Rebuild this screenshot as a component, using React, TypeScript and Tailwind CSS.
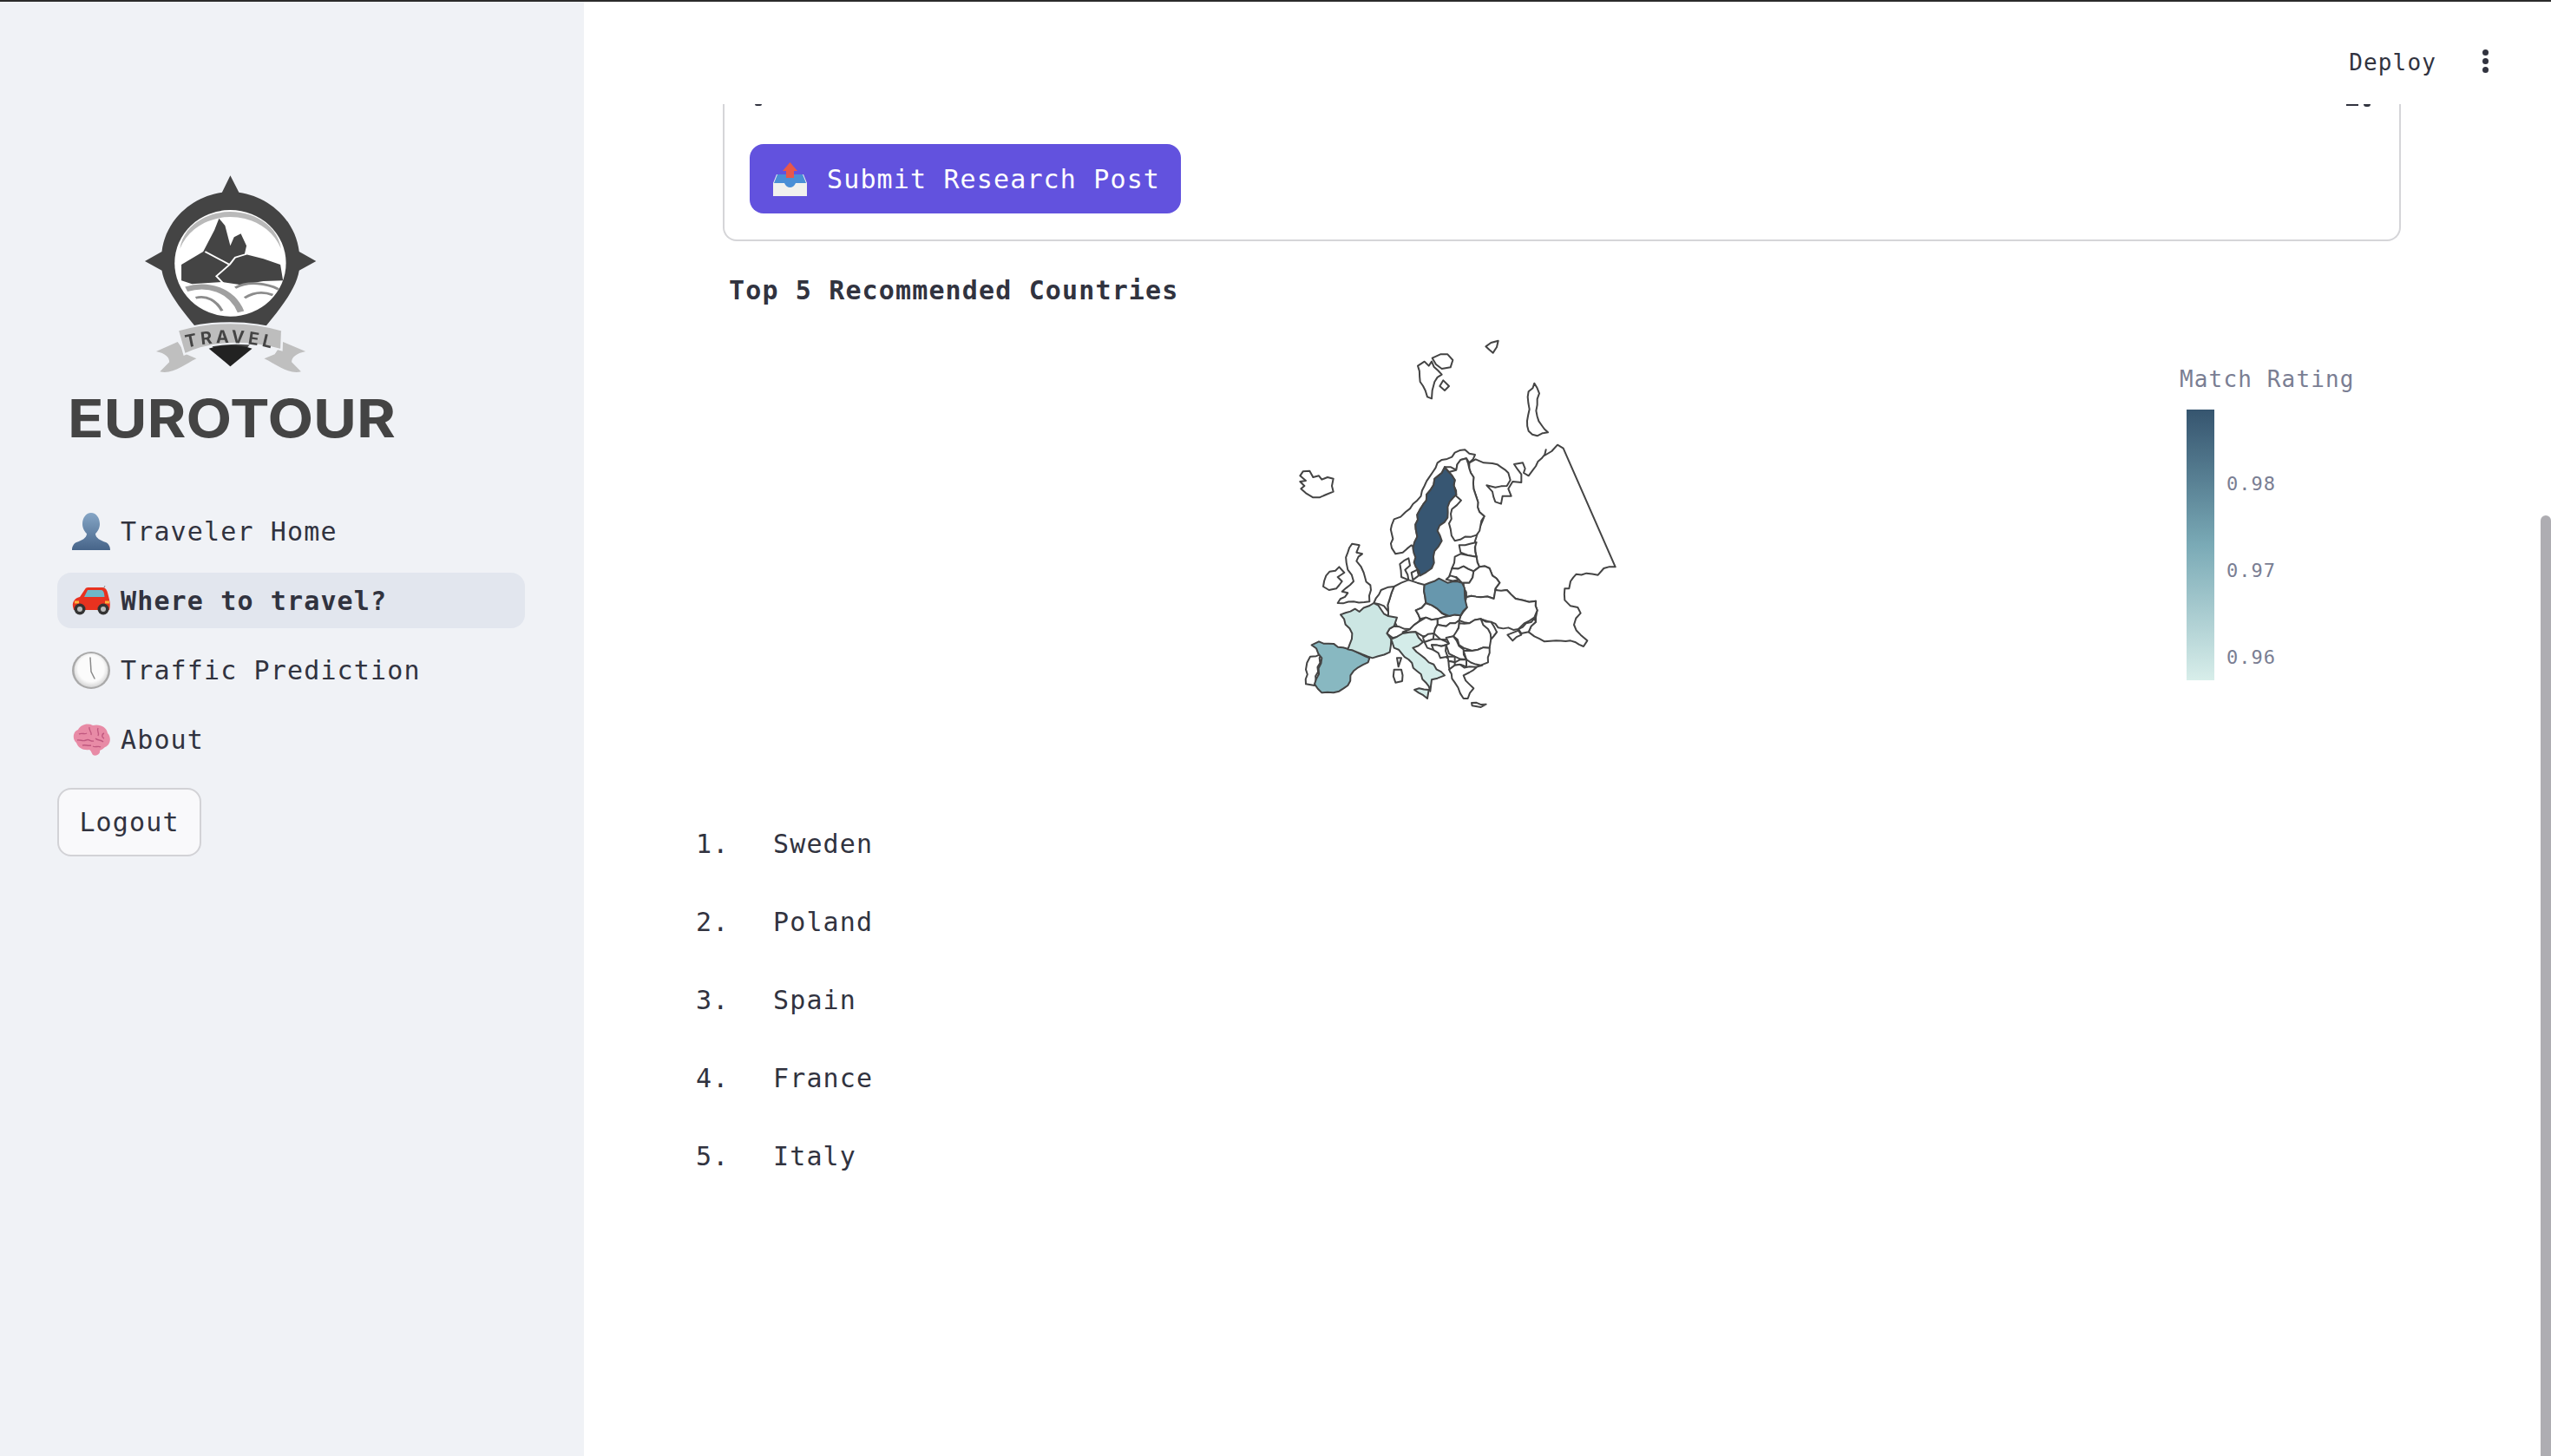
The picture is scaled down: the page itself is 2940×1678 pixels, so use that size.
import React from "react";

const mono = "font-['DejaVu_Sans_Mono','Liberation_Mono',monospace]";

// adds small coastline wobble; the seed comes from the sorted end points so shared borders stay together
const roughen = (pts: string) => {
  const p = pts.split(" ").map((s) => s.split(",").map(Number));
  const res: string[] = [];
  p.forEach((a, i) => {
    const b = p[(i + 1) % p.length];
    res.push(a.join(","));
    const len = Math.hypot(b[0] - a[0], b[1] - a[1]);
    if (len < 22 || len > 170) return;
    const forward = a[0] + a[1] * 2000 < b[0] + b[1] * 2000;
    const [s, e] = forward ? [a, b] : [b, a];
    const n = Math.floor(len / 16);
    const mids: string[] = [];
    for (let k = 1; k < n; k++) {
      const t = k / n;
      const r = Math.sin(s[0] * 12.9 + e[1] * 78.2 + k * 37.7) * 43758.5;
      const off = (r - Math.floor(r) - 0.5) * 11;
      const x = s[0] + (e[0] - s[0]) * t - ((e[1] - s[1]) / len) * off;
      const y = s[1] + (e[1] - s[1]) * t + ((e[0] - s[0]) / len) * off;
      mids.push(`${x.toFixed(1)},${y.toFixed(1)}`);
    }
    res.push(...(forward ? mids : mids.reverse()));
  });
  return res.join(" ");
};

const neutral: string[] = [
  "115,535 125,520 148,518 160,540 180,535 190,548 210,540 230,545 225,570 230,590 205,600 160,610 135,595 118,580 130,570 115,555 135,552",
  "522,155 545,140 560,155 570,140 605,185 580,210 572,240 570,268 555,262 548,240 530,210",
  "572,128 600,115 625,115 643,135 635,160 605,165 585,150",
  "598,225 610,205 630,225 615,240",
  "757,88 775,75 800,68 795,90 782,110 770,100",
  "925,215 942,250 935,290 935,330 950,360 972,385 935,397 905,380 900,345 908,305 902,262",
  // russia
  "722,478 750,490 780,492 810,505 835,525 842,550 830,570 790,575 760,568 780,590 790,625 810,632 815,605 845,605 835,580 850,555 880,558 880,530 855,495 885,490 893,510 888,525 905,535 920,515 950,475 965,445 960,465 985,450 1005,428 1025,440 1205,850 1165,855 1145,878 1105,872 1070,875 1050,900 1045,925 1030,925 1030,965 1050,985 1075,990 1085,1010 1062,1050 1085,1085 1108,1105 1095,1125 1050,1105 1000,1105 960,1108 925,1090 905,1075 930,1040 930,1025 935,1000 930,968 885,965 860,960 830,930 800,935 790,925 805,905 780,880 770,855 735,850 725,815 725,745 752,675 735,660 725,610 715,580 715,540 700,510 700,490",
  // norway
  "432,705 440,685 480,660 520,620 545,570 590,490 640,470 650,455 685,445 720,462 700,490 690,475 670,480 655,515 615,505 605,525 580,545 565,585 540,635 520,670 515,720 520,745 505,780 500,775 470,800 445,805 432,785",
  // finland
  "655,605 672,620 640,650 630,700 650,760 725,740 752,675 735,660 725,610 715,580 715,540 700,510 690,475 670,480 655,515 630,522 615,505 650,550",
  "665,775 725,765 725,815 695,810 670,800",
  "640,855 650,815 670,805 695,810 725,815 735,850 715,865 680,848",
  "640,855 680,848 715,865 700,905 675,905 655,885 630,885",
  "620,893 635,880 665,895",
  "715,865 735,850 770,855 780,880 805,905 790,925 785,960 740,955 690,955 680,905 700,905",
  "690,955 740,955 785,960 790,930 830,930 860,960 885,965 930,968 935,1000 925,1025 890,1045 870,1065 800,1060 775,1040 740,1030 700,1045 665,1035 670,1020 692,990",
  "832,1085 870,1070 880,1085 850,1105",
  "870,1065 925,1028 930,1040 905,1075 880,1080",
  // germany
  "440,918 465,905 490,895 520,905 545,912 550,975 515,1000 530,1030 525,1040 495,1065 450,1055 420,1020 420,1005 425,960",
  "465,885 460,840 490,820 495,845 478,860 490,895",
  "500,870 520,860 525,880 505,895",
  "515,1000 550,975 590,995 625,1020 590,1030 550,1025 530,1030",
  "590,1030 630,1020 670,1018 665,1035 620,1055 590,1050",
  "495,1065 525,1040 550,1025 590,1030 590,1050 578,1080 540,1090 515,1075 470,1075",
  "590,1050 620,1055 665,1035 650,1090 600,1100 578,1080",
  "665,1045 700,1045 740,1030 770,1040 795,1075 775,1100 770,1130 710,1140 680,1130 645,1090",
  "740,1030 775,1040 795,1075 775,1100 765,1065",
  "680,1140 710,1140 770,1130 765,1180 740,1190 690,1170",
  "540,1095 578,1080 575,1100 545,1110",
  "545,1110 575,1100 600,1100 630,1115 620,1120 570,1120 625,1165 585,1140 555,1130",
  "570,1120 620,1120 625,1160 600,1165",
  "620,1095 645,1090 680,1135 690,1170 650,1160 630,1150 620,1120 630,1115",
  "625,1160 650,1160 650,1180 628,1175",
  "628,1175 650,1180 650,1225 635,1215",
  "650,1180 690,1170 690,1195 650,1190",
  "630,1205 650,1190 700,1195 745,1190 700,1215 680,1225 715,1270 695,1305 680,1305 650,1250",
  "708,1320 758,1325 740,1335 710,1330",
  // uk, ireland
  "275,835 280,800 295,770 320,775 310,800 330,805 310,830 335,870 360,930 355,970 300,970 245,975 280,940 260,935 300,900 280,860",
  "205,880 250,850 268,870 245,885 260,900 240,925 215,930 195,918",
  "370,975 395,930 420,920 440,918 425,960 420,1005 405,985",
  "150,1160 190,1150 165,1260 135,1255 135,1205",
  "415,1080 440,1055 495,1065 470,1075 470,1080 435,1095",
  "450,1165 465,1165 455,1195",
  "440,1205 465,1205 468,1245 445,1250",
];

const filled: { pts: string; fill: string }[] = [
  {
    pts: "615,505 650,550 655,600 632,625 625,680 590,725 605,760 580,795 570,855 530,880 515,850 505,785 520,745 515,720 520,670 540,635 565,585 580,545 605,525",
    fill: "#375672",
  },
  { pts: "545,912 595,890 625,905 675,905 685,960 692,990 670,1018 630,1020 590,995 550,975", fill: "#6797ad" },
  { pts: "155,1120 180,1108 280,1133 355,1165 350,1180 300,1210 280,1260 250,1280 190,1285 165,1255 190,1165", fill: "#88b8c1" },
  { pts: "255,1015 305,995 320,1005 370,975 420,1020 450,1025 440,1055 415,1080 430,1100 425,1145 365,1165 280,1135 295,1080", fill: "#cce6e3" },
  { pts: "430,1100 470,1080 515,1075 540,1110 505,1130 560,1180 615,1225 590,1235 570,1240 565,1280 550,1250 490,1170 440,1130", fill: "#d4ece9" },
  { pts: "510,1275 560,1275 555,1305", fill: "#d4ece9" },
];

const EuropeMap = () => (
  <svg width={440} height={460} viewBox="0 0 1320 1380" className="shrink-0">
    <g stroke="#444" strokeWidth={6} strokeLinejoin="round">
      {neutral.map((pts, i) => (
        <polygon key={i} points={roughen(pts)} fill="#fff" />
      ))}
      {filled.map((c, i) => (
        <polygon key={i} points={roughen(c.pts)} fill={c.fill} />
      ))}
    </g>
  </svg>
);

const Logo = () => (
  <svg width={680} height={360} viewBox="0 0 680 360" className="block blur-[0.5px]">
    <g transform="scale(0.4337 0.3333)">
      <path
        d="M612 97L590 155C510 170 440 250 430 360L385 393L430 425C440 500 490 580 612 757C735 580 785 500 795 425L840 393L795 360C785 250 715 170 635 155Z"
        fill="#444"
      />
      <ellipse cx={612} cy={400} rx={148} ry={184} fill="#fff" />
      <path d="M478 350C488 268 550 222 612 222C675 222 737 268 747 350C725 280 670 240 612 240C555 240 500 280 478 350Z" fill="#b9b9b9" />
      <path
        d="M482 405L540 360L552 330L570 285L582 245L598 270L612 340L622 310L640 298L655 340L650 368L700 385L745 405L752 460L700 462L640 475L590 465L510 472L482 460Z"
        fill="#444"
      />
      <path d="M545 360L610 405L575 445L595 472M610 405L625 380L655 368" fill="none" stroke="#fff" strokeWidth={5} />
      <path d="M495 490C550 468 615 490 640 568" fill="none" stroke="#a0a0a0" strokeWidth={18} />
      <path d="M520 520C550 510 575 530 590 565M625 485C660 460 710 470 740 490M650 520C680 495 705 500 725 510" fill="none" stroke="#8c8c8c" strokeWidth={8} />
      <path d="M555 695C590 680 635 680 670 695L612 757Z" fill="#222" />
      <path d="M472 672L415 705C440 712 450 725 450 742L425 775C460 785 490 750 522 730L495 715Z" fill="#bfbfbf" />
      <path d="M752 672L812 705C787 712 775 725 775 742L800 775C765 785 735 750 702 730L730 715Z" fill="#bfbfbf" />
      <path d="M472 632C560 598 665 598 750 632L748 700C660 668 565 668 490 715Z" fill="#bdbdbd" stroke="#f0f2f6" strokeWidth={6} />
    </g>
    <path id="ribbon" d="M215 231Q265 218 318 233" fill="none" />
    <text fontFamily="Inter, sans-serif" fontWeight={700} fontSize={20} letterSpacing={4} fill="#444">
      <textPath href="#ribbon">TRAVEL</textPath>
    </text>
    <text
      x={78}
      y={334}
      fontFamily="Inter, sans-serif"
      fontWeight={700}
      fontSize={60}
      textLength={378}
      lengthAdjust="spacingAndGlyphs"
      fill="#444"
    >
      EUROTOUR
    </text>
  </svg>
);

const PersonIcon = () => (
  <svg width={44} height={43} viewBox="0 0 44 43">
    <defs>
      <linearGradient id="person" x1="0" y1="0" x2="0" y2="1">
        <stop offset="0" stopColor="#86a6c6" />
        <stop offset="1" stopColor="#466489" />
      </linearGradient>
    </defs>
    <path
      d="M22 0C28 0 32 6 32 13C32 18 29 22 27 24C27 29 33 32 39 34C43 36 44 40 44 43H0C0 40 1 36 5 34C11 32 17 29 17 24C15 22 12 18 12 13C12 6 16 0 22 0Z"
      fill="url(#person)"
    />
  </svg>
);

const CarIcon = () => (
  <svg width={44} height={34} viewBox="0 0 44 34">
    <path d="M36 4L38 0" stroke="#888" strokeWidth={1} />
    <path d="M1 24C0 18 4 14 9 13L15 4C16 2 18 2 20 2H34C38 2 40 4 41 8L43 16C44 20 44 24 43 28H2Z" fill="#e8321f" />
    <path d="M18 5H33C36 5 37 7 37.5 13H14Z" fill="#6fb8c8" />
    <path d="M3 19H8M38 19H43" stroke="#ffb13b" strokeWidth={3} />
    <circle cx={9} cy={27} r={6.5} fill="#333" />
    <circle cx={9} cy={27} r={3} fill="#bbb" />
    <circle cx={36} cy={27} r={6.5} fill="#333" />
    <circle cx={36} cy={27} r={3} fill="#bbb" />
  </svg>
);

const ClockIcon = () => (
  <svg width={44} height={43} viewBox="0 0 44 43">
    <defs>
      <radialGradient id="face" cx="0.5" cy="0.45" r="0.55">
        <stop offset="0.7" stopColor="#fbfbfb" />
        <stop offset="1" stopColor="#d6d6d6" />
      </radialGradient>
    </defs>
    <ellipse cx={22} cy={21.5} rx={22} ry={21.5} fill="#a9a9a9" />
    <ellipse cx={22} cy={21.5} rx={19.5} ry={19.5} fill="url(#face)" />
    <path d="M21 7L22 23L26 31" fill="none" stroke="#8a8a8a" strokeWidth={1.5} strokeLinecap="round" />
  </svg>
);

const BrainIcon = () => (
  <svg width={44} height={37} viewBox="0 0 44 37">
    <path
      d="M5 22C0 18 1 9 7 7C10 1 18-1 24 2C32 0 40 4 41 11C46 16 44 25 38 27C36 29 34 30 32 31C33 35 28 38 24 36C22 33 22 31 20 30C13 31 7 28 5 22Z"
      fill="#e88ba6"
    />
    <path
      d="M8 12C12 10 14 13 17 11M20 4C19 8 23 9 22 13M30 5C28 9 32 10 30 14M37 11C34 12 34 16 37 17M6 19C10 18 12 21 16 19C20 17 21 21 25 20M27 17C30 20 33 18 36 21M12 25C16 24 18 26 22 25M24 26C27 28 30 25 33 27"
      fill="none"
      stroke="#c0587f"
      strokeWidth={1.4}
    />
  </svg>
);

const InboxIcon = () => (
  <svg width={39} height={39} viewBox="0 0 39 39" className="shrink-0">
    <path d="M19.5 0L28 10H24V20H15V10H11Z" fill="#e8574a" />
    <path d="M4 14H35L39 24V39H0V24Z" fill="#f1f1ee" />
    <path d="M5 14H34L38 24H26C25 27 22 29 19.5 29C17 29 14 27 13 24H1Z" fill="#4a8fd6" />
    <path d="M15 14H24V18H15Z" fill="#e8574a" />
  </svg>
);

const nav = [
  { icon: <PersonIcon />, label: "Traveler Home" },
  { icon: <CarIcon />, label: "Where to travel?", active: true },
  { icon: <ClockIcon />, label: "Traffic Prediction" },
  { icon: <BrainIcon />, label: "About" },
];

const countries = ["Sweden", "Poland", "Spain", "France", "Italy"];
const ticks = ["0.98", "0.97", "0.96"];

export default function App() {
  return (
    <div className={`${mono} flex h-[1678px] overflow-hidden border-t-2 border-[#2b2b2b] bg-white text-[#31333f]`}>
      <aside className="w-[673px] shrink-0 bg-[#f0f2f6] pt-[168px]">
        <Logo />
        <nav className="ml-[66px] mt-[50px] flex w-[539px] flex-col gap-4">
          {nav.map((item) => (
            <div
              key={item.label}
              className={`flex h-16 items-center gap-3 rounded-2xl pl-[17px] text-[30px] tracking-[1.14px] ${
                item.active ? "bg-[#e2e6ee] font-bold" : ""
              }`}
            >
              <span className="flex w-11 justify-center">{item.icon}</span>
              {item.label}
            </div>
          ))}
        </nav>
        <button className="ml-[66px] mt-6 h-[79px] w-[166px] rounded-2xl border-2 border-[#d2d2d6] bg-[#f9f9fb] text-[30px] tracking-[1.14px]">
          Logout
        </button>
      </aside>

      <main className="relative flex-1 pl-[129px]">
        <header className="flex h-[118px] items-start justify-end gap-[53px] pr-[72px] pt-[52px]">
          <span className="text-[26px] leading-9 tracking-[1.15px]">Deploy</span>
          <span className="mt-[3px] flex flex-col gap-[3px]">
            <i className="size-[7px] rounded-full bg-[#31333f]" />
            <i className="size-[7px] rounded-full bg-[#31333f]" />
            <i className="size-[7px] rounded-full bg-[#31333f]" />
          </span>
        </header>

        <section className="ml-[31px] w-[1934px] rounded-b-2xl border-2 border-t-0 border-[#d5d5d8] pl-[29px] pr-[33px]">
          <div className="flex h-[3px] justify-between">
            <i className="ml-[6px] h-[2px] w-2 rounded-b-full bg-[#31333f]" />
            <span className="flex gap-[6px]">
              <i className="h-[2px] w-[14px] bg-[#31333f]" />
              <i className="h-[3px] w-2 rounded-b-full bg-[#31333f]" />
            </span>
          </div>
          <button className="mt-[43px] flex h-20 w-[497px] items-center gap-[23px] rounded-2xl bg-[#6252de] pl-[27px] text-[30px] tracking-[1.14px] text-white">
            <InboxIcon />
            Submit Research Post
          </button>
          <div className="h-[30px]" />
        </section>

        <h3 className="ml-[38px] mt-[33px] text-[30px] font-bold leading-[48px] tracking-[1.14px]">
          Top 5 Recommended Countries
        </h3>

        <div className="ml-[31px] mt-[11px] flex h-[460px]">
          <div className="ml-[627px]">
            <EuropeMap />
          </div>
          <div className="ml-[612px] pt-[49px] text-[#7a7e93]">
            <div className="text-[26px] leading-9 tracking-[1.15px]">Match Rating</div>
            <div className="mt-[17px] flex">
              <div className="ml-2 h-[312px] w-8 bg-gradient-to-b from-[#36556f] via-[#7aaab6] to-[#d8eeea]" />
              <div className="ml-[14px] flex flex-col gap-[70px] pt-[71px] text-[22px] leading-[30px] tracking-[1px]">
                {ticks.map((t) => (
                  <span key={t}>{t}</span>
                ))}
              </div>
            </div>
          </div>
        </div>

        <ol className="mt-[119px] flex flex-col gap-[42px] text-[30px] leading-[48px] tracking-[1.14px]">
          {countries.map((c, i) => (
            <li key={c} className="flex">
              <span className="w-[89px]">{i + 1}.</span>
              {c}
            </li>
          ))}
        </ol>

        <div className="absolute bottom-0 right-0 top-[592px] w-3 rounded-t-full bg-[#aeadb2]" />
      </main>
    </div>
  );
}
